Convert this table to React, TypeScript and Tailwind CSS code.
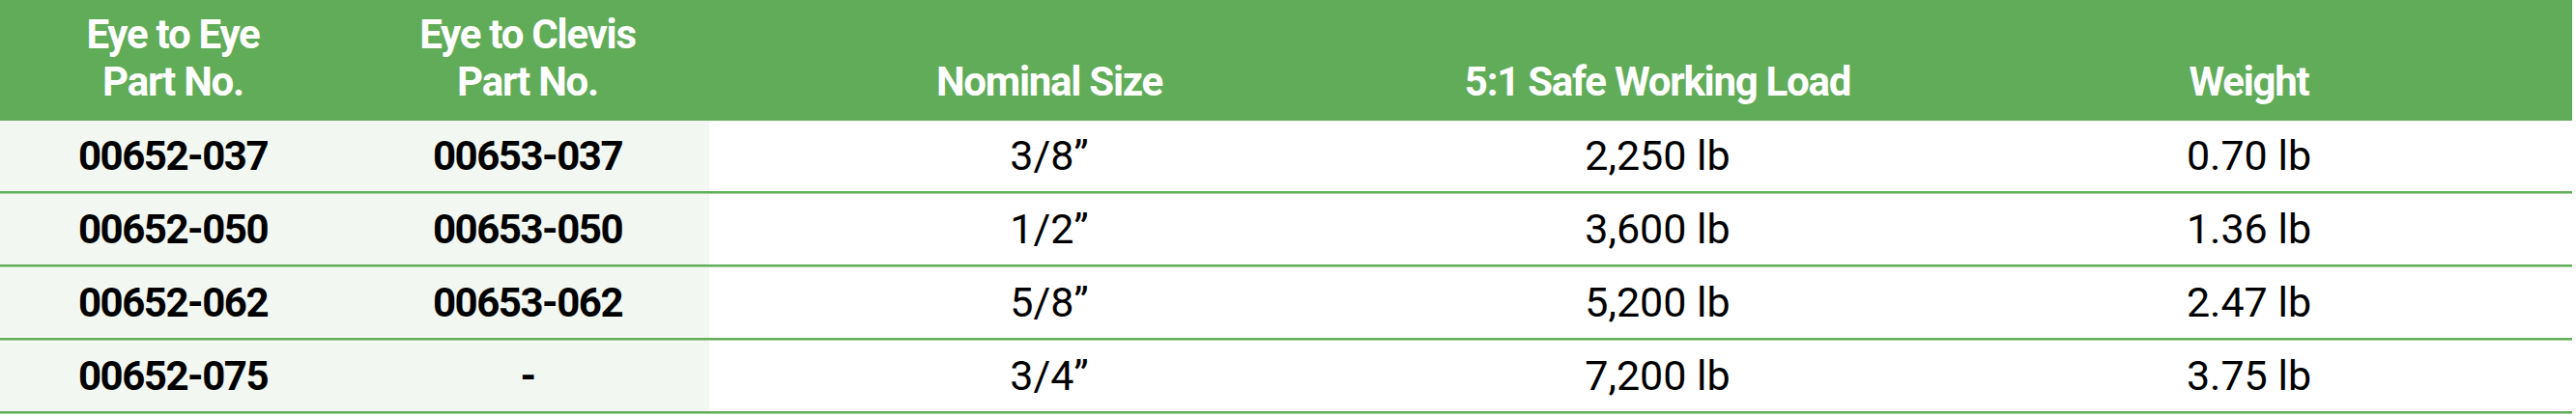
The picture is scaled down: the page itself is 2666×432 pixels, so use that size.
const rows = [
  { a: '00652-037', b: '00653-037', size: '3/8\u201D', load: '2,250 lb', weight: '0.70 lb' },
  { a: '00652-050', b: '00653-050', size: '1/2\u201D', load: '3,600 lb', weight: '1.36 lb' },
  { a: '00652-062', b: '00653-062', size: '5/8\u201D', load: '5,200 lb', weight: '2.47 lb' },
  { a: '00652-075', b: '-', size: '3/4\u201D', load: '7,200 lb', weight: '3.75 lb' },
];

const cols = 'grid grid-cols-[358px_376px_704px_555px_669px]';

export default function App() {
  return (
    <div className="w-[2662px] bg-white font-['Roboto',sans-serif] text-[43px] text-black">
      <div className={`${cols} h-[125px] bg-[#61ac58] text-white font-bold text-[42px] leading-[49px] tracking-[-0.03em]`}>
        <div className="flex flex-col items-center justify-end pb-4">
          <span>Eye to Eye</span>
          <span>Part No.</span>
        </div>
        <div className="flex flex-col items-center justify-end pb-4">
          <span>Eye to Clevis</span>
          <span>Part No.</span>
        </div>
        <div className="flex items-end justify-center pb-4">Nominal Size</div>
        <div className="flex items-end justify-center pb-4">5:1 Safe Working Load</div>
        <div className="flex items-end justify-center pb-4">Weight</div>
      </div>
      {rows.map(r => (
        <div key={r.a} className="border-b border-[#a9d6a2]">
          <div className={`${cols} h-[75px] border-b-2 border-[#62ad59]`}>
            <div className="flex items-center justify-center bg-[#f2f7f1] text-[42px] font-bold tracking-[-0.035em]">{r.a}</div>
            <div className="flex items-center justify-center bg-[#f2f7f1] text-[42px] font-bold tracking-[-0.035em]">{r.b}</div>
            <div className="flex items-center justify-center">{r.size}</div>
            <div className="flex items-center justify-center">{r.load}</div>
            <div className="flex items-center justify-center">{r.weight}</div>
          </div>
        </div>
      ))}
    </div>
  );
}
